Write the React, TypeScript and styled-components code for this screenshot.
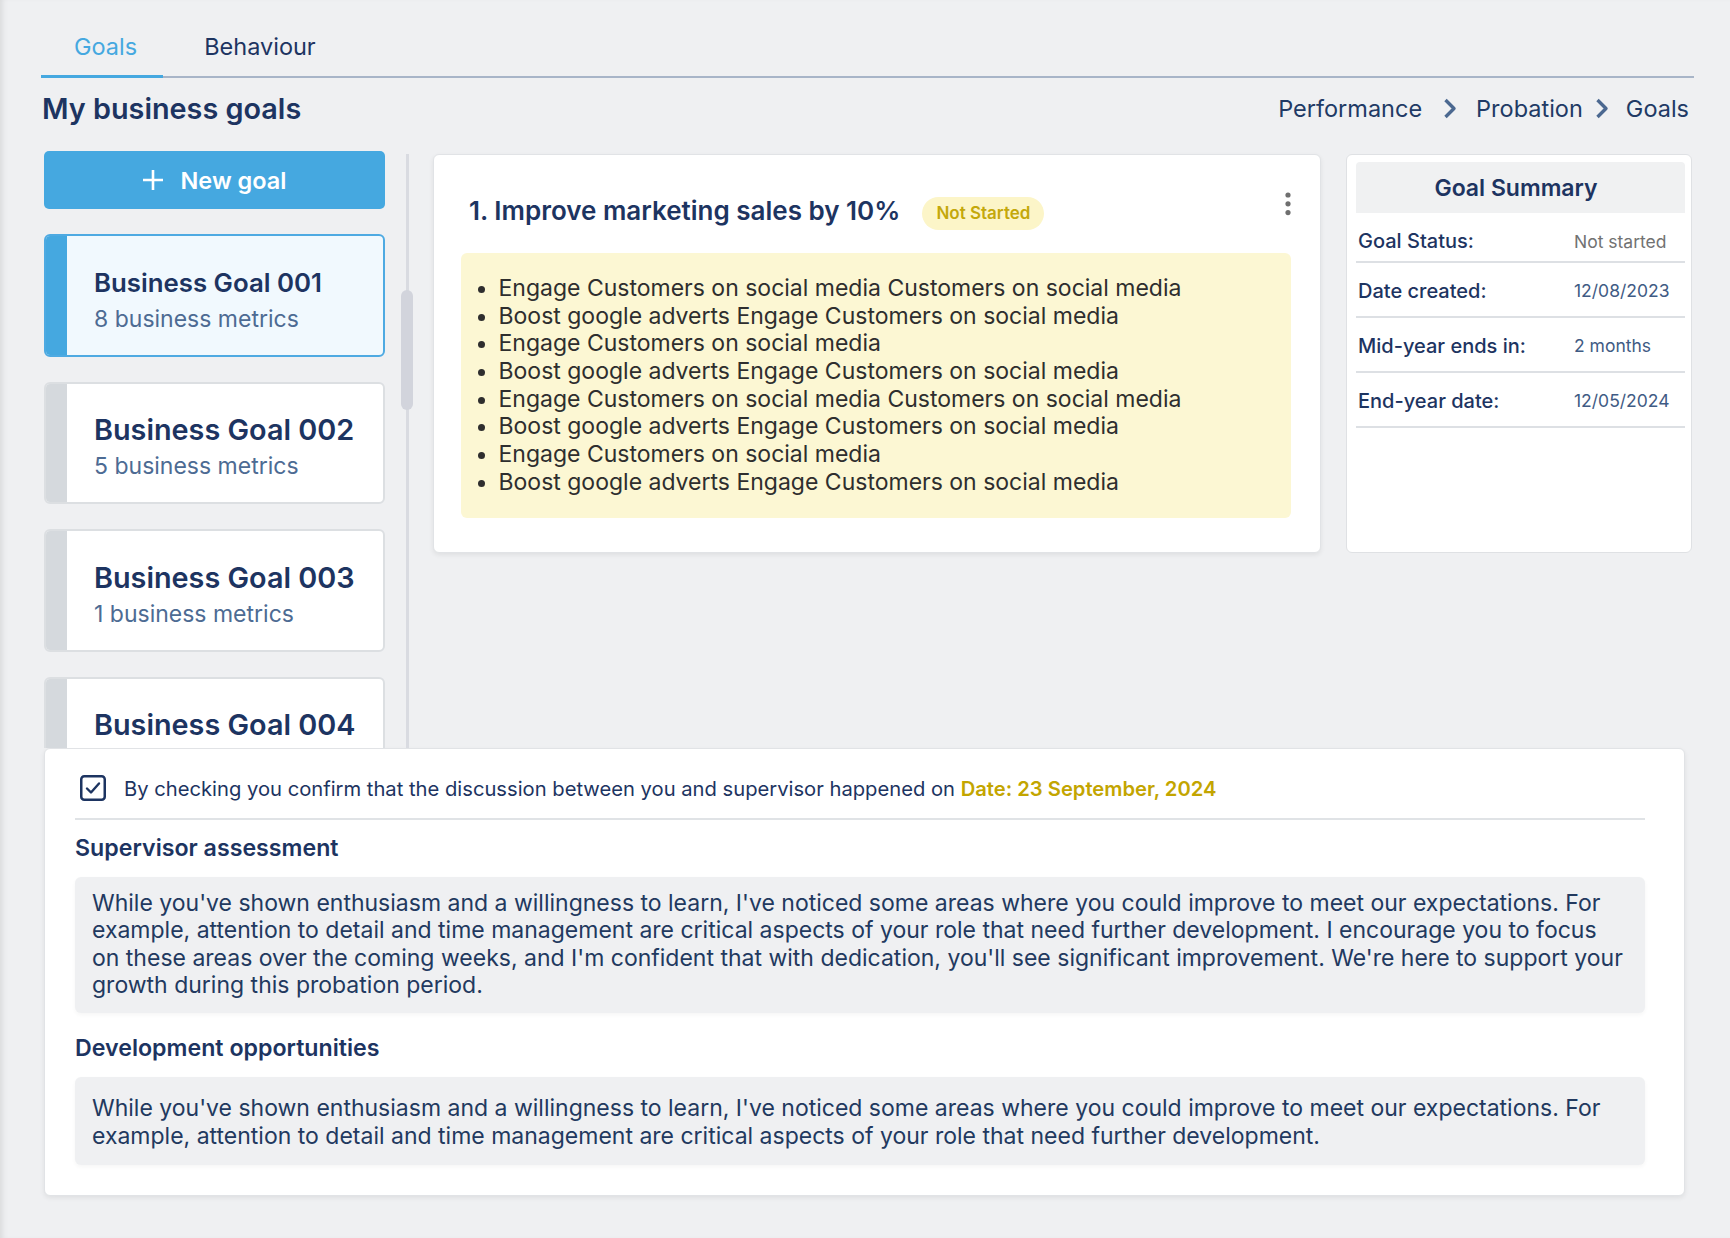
import React from 'react';
import styled, { createGlobalStyle } from 'styled-components';

const GlobalStyle = createGlobalStyle`
  html, body { margin: 0; padding: 0; background: #eff0f2; }
  body {
    font-family: Inter, "Noto Sans", Arial, sans-serif;
    color: #1d3461;
    -webkit-font-smoothing: antialiased;
  }
  * { box-sizing: border-box; }
`;

const NAVY = '#1d3461';

const Page = styled.div`
  min-height: 1238px;
  padding: 0 36px 0 41px;
  box-shadow: inset 6px 0 6px -4px rgba(0, 0, 0, 0.1);
`;

const Tabs = styled.nav`
  display: flex;
  gap: 8px;
  height: 78px;
  border-bottom: 2px solid #a8b5c8;
`;

const Tab = styled.div<{ $active?: boolean }>`
  display: flex;
  align-items: center;
  padding: 17px 26px 0 33px;
  margin-bottom: -2px;
  border-bottom: 3px solid ${(p) => (p.$active ? '#45a8e0' : 'transparent')};
  font-size: 23.5px;
  font-weight: 400;
  color: ${(p) => (p.$active ? '#45a8e0' : NAVY)};
`;

const TitleRow = styled.header`
  display: flex;
  align-items: center;
  justify-content: space-between;
  height: 37px;
  margin-top: 12px;
  padding: 0 5px 0 1px;
`;

const PageTitle = styled.h1`
  margin: 0;
  font-size: 28.8px;
  font-weight: 600;
  color: ${NAVY};
`;

const Breadcrumb = styled.div`
  display: flex;
  align-items: center;
  font-size: 23.5px;
  color: #213a65;
`;

const CrumbSep = styled.span<{ $before: number; $after: number }>`
  display: flex;
  margin: 0 ${(p) => p.$after}px 0 ${(p) => p.$before}px;
`;

const Content = styled.div`
  display: flex;
  align-items: flex-start;
  height: 597px;
  margin: 24px 0 0 3px;
`;

const LeftCol = styled.div`
  width: 341px;
  height: 597px;
  flex-shrink: 0;
  display: flex;
  flex-direction: column;
  gap: 25px;
  overflow: hidden;
`;

const NewGoalButton = styled.button`
  height: 58px;
  flex-shrink: 0;
  border: none;
  border-radius: 5px;
  background: #45a8e0;
  color: #fff;
  font-family: inherit;
  font-size: 23.5px;
  font-weight: 600;
  display: flex;
  align-items: center;
  justify-content: center;
  gap: 18px;
  cursor: pointer;
`;

const GoalItem = styled.div<{ $active?: boolean }>`
  height: 122.5px;
  flex-shrink: 0;
  display: flex;
  border-radius: 6px;
  overflow: hidden;
  border: 2px solid ${(p) => (p.$active ? '#4eaae2' : '#dcdfe2')};
  background: ${(p) => (p.$active ? '#f1f9fe' : '#ffffff')};
`;

const Accent = styled.div<{ $active?: boolean }>`
  width: 21px;
  flex-shrink: 0;
  background: ${(p) => (p.$active ? '#45a8e0' : '#d5d9dd')};
`;

const ItemBody = styled.div`
  display: flex;
  flex-direction: column;
  justify-content: flex-start;
  padding: 30.5px 0 0 27px;
`;

const ItemTitle = styled.div<{ $active?: boolean }>`
  font-size: ${(p) => (p.$active ? 25.8 : 28.8)}px;
  line-height: 32px;
  font-weight: 600;
  color: ${NAVY};
  white-space: nowrap;
`;

const ItemSub = styled.div`
  margin-top: 6px;
  font-size: 23px;
  line-height: 28px;
  color: #4d6b93;
`;

const ScrollRail = styled.div`
  width: 12px;
  height: 594px;
  flex-shrink: 0;
  margin: 3px 20px 0 16px;
  display: flex;
  flex-direction: column;
  background: linear-gradient(#d9dbe1, #d9dbe1) center / 3px 100% no-repeat;
`;

const ScrollThumb = styled.div`
  width: 12px;
  height: 120px;
  margin-top: 136px;
  border-radius: 6px;
  background: #d2d4dc;
`;

const Card = styled.section`
  background: #ffffff;
  border: 1px solid #e1e3e6;
  border-radius: 6px;
  box-shadow: 0 2px 5px rgba(0, 0, 0, 0.07);
`;

const GoalCard = styled(Card)`
  width: 888px;
  height: 399px;
  flex-shrink: 0;
  margin-top: 3px;
  padding: 24px 29px 0 27px;
`;

const GoalHeader = styled.div`
  display: flex;
  align-items: center;
  gap: 22px;
  height: 62px;
  padding-left: 8px;
`;

const GoalTitle = styled.h2`
  margin: 0;
  font-size: 26px;
  font-weight: 600;
  color: ${NAVY};
`;

const Badge = styled.span`
  display: inline-flex;
  align-items: center;
  height: 33px;
  padding: 0 14px;
  border-radius: 17px;
  background: #fcf5c8;
  color: #c4a80b;
  font-size: 17px;
  font-weight: 600;
  margin-top: 6px;
`;

const Kebab = styled.button`
  margin-left: auto;
  margin-bottom: 13px;
  padding: 0;
  border: none;
  background: none;
  display: flex;
  cursor: pointer;
`;

const MetricsBox = styled.div`
  margin-top: 12px;
  height: 265px;
  border-radius: 6px;
  background: #fcf7d3;
  padding: 22px 20px 22px 37.5px;
`;

const MetricsList = styled.ul`
  margin: 0;
  padding: 0;
  list-style: disc;
  font-size: 23px;
  line-height: 27.65px;
  color: #2e2e2e;
`;

const SummaryCard = styled(Card)`
  width: 346px;
  height: 399px;
  flex-shrink: 0;
  margin: 3px 0 0 25px;
  padding: 7px 6px 0 9px;
  box-shadow: none;
  border: 1.5px solid #dfe1e4;
`;

const SummaryHeader = styled.h3`
  margin: 0;
  height: 51px;
  display: flex;
  align-items: center;
  justify-content: center;
  padding-right: 9px;
  background: #f0f1f2;
  border-radius: 4px 4px 0 0;
  font-size: 23px;
  font-weight: 600;
  color: ${NAVY};
`;

const SummaryRow = styled.div`
  display: grid;
  grid-template-columns: 216px 1fr;
  align-items: center;
  height: 55px;
  padding: 2px 0 0 2px;
  border-bottom: 2px solid #dde0e4;
  &:first-of-type {
    height: 50px;
    padding-top: 8px;
  }
`;

const SummaryLabel = styled.span`
  font-size: 20px;
  font-weight: 500;
  color: ${NAVY};
`;

const SummaryValue = styled.span<{ $muted?: boolean }>`
  font-size: 17.5px;
  color: ${(p) => (p.$muted ? '#727272' : '#3f5b84')};
`;

const BottomPanel = styled(Card)`
  width: 1641px;
  margin-left: 3px;
  padding: 26px 39px 30.5px 30px;
`;

const CheckRow = styled.label`
  display: flex;
  align-items: center;
  gap: 18px;
  height: 45px;
  padding: 0 0 17px 5px;
  border-bottom: 2px solid #e0e3e6;
  font-size: 20.2px;
  color: ${NAVY};
`;

const DateText = styled.span`
  color: #c3a500;
  font-weight: 600;
`;

const SectionHeading = styled.h3<{ $top: number }>`
  margin: ${(p) => p.$top}px 0 15px;
  font-size: 23.2px;
  line-height: 28px;
  font-weight: 600;
  color: ${NAVY};
`;

const TextBox = styled.div<{ $padTop: number; $padBottom: number }>`
  background: #eff0f2;
  border-radius: 6px;
  box-shadow: 0 2px 4px rgba(0, 0, 0, 0.04);
  padding: ${(p) => p.$padTop}px 17px ${(p) => p.$padBottom}px 17px;
  font-size: 23px;
  line-height: 27.5px;
  color: #22395f;
`;

const PlusIcon = () => (
  <svg width="20" height="20" viewBox="0 0 20 20" aria-hidden>
    <path d="M10 0v20M0 10h20" stroke="#fff" strokeWidth="2.6" />
  </svg>
);

const Chevron = () => (
  <svg width="14" height="21" viewBox="0 0 14 21" aria-hidden>
    <polyline points="2.5,2 11,10.5 2.5,19" fill="none" stroke="#4b6890" strokeWidth="3.4" strokeLinejoin="round" />
  </svg>
);

const KebabIcon = () => (
  <svg width="6" height="24" viewBox="0 0 6 24" aria-hidden>
    <circle cx="3" cy="3" r="2.6" fill="#6f6f6f" />
    <circle cx="3" cy="11.8" r="2.6" fill="#6f6f6f" />
    <circle cx="3" cy="20.6" r="2.6" fill="#6f6f6f" />
  </svg>
);

const CheckIcon = () => (
  <svg width="26" height="26" viewBox="0 0 26 26" aria-hidden>
    <rect x="1.25" y="1.25" width="23.5" height="23.5" rx="3" fill="#fff" stroke={NAVY} strokeWidth="2.5" />
    <path d="M7 13.5l4 4 8-9" fill="none" stroke={NAVY} strokeWidth="2.4" strokeLinecap="round" strokeLinejoin="round" />
  </svg>
);

const goals: { title: string; sub?: string; active?: boolean }[] = [
  { title: 'Business Goal 001', sub: '8 business metrics', active: true },
  { title: 'Business Goal 002', sub: '5 business metrics' },
  { title: 'Business Goal 003', sub: '1 business metrics' },
  { title: 'Business Goal 004' },
];

const metrics = [
  'Engage Customers on social media Customers on social media',
  'Boost google adverts Engage Customers on social media',
  'Engage Customers on social media',
  'Boost google adverts Engage Customers on social media',
  'Engage Customers on social media Customers on social media',
  'Boost google adverts Engage Customers on social media',
  'Engage Customers on social media',
  'Boost google adverts Engage Customers on social media',
];

const summary = [
  { label: 'Goal Status:', value: 'Not started', muted: true },
  { label: 'Date created:', value: '12/08/2023' },
  { label: 'Mid-year ends in:', value: '2 months' },
  { label: 'End-year date:', value: '12/05/2024' },
];

const assessment =
  "While you've shown enthusiasm and a willingness to learn, I've noticed some areas where you could improve to meet our expectations. For example, attention to detail and time management are critical aspects of your role that need further development. I encourage you to focus on these areas over the coming weeks, and I'm confident that with dedication, you'll see significant improvement. We're here to support your growth during this probation period.";

const development =
  "While you've shown enthusiasm and a willingness to learn, I've noticed some areas where you could improve to meet our expectations. For example, attention to detail and time management are critical aspects of your role that need further development.";

export default function App() {
  return (
    <>
      <GlobalStyle />
      <Page>
        <Tabs>
          <Tab $active>Goals</Tab>
          <Tab>Behaviour</Tab>
        </Tabs>

        <TitleRow>
          <PageTitle>My business goals</PageTitle>
          <Breadcrumb>
            <span>Performance</span>
            <CrumbSep $before={21} $after={19}>
              <Chevron />
            </CrumbSep>
            <span>Probation</span>
            <CrumbSep $before={12} $after={17}>
              <Chevron />
            </CrumbSep>
            <span>Goals</span>
          </Breadcrumb>
        </TitleRow>

        <Content>
          <LeftCol>
            <NewGoalButton>
              <PlusIcon />
              New goal
            </NewGoalButton>
            {goals.map((g) => (
              <GoalItem key={g.title} $active={g.active}>
                <Accent $active={g.active} />
                <ItemBody>
                  <ItemTitle $active={g.active}>{g.title}</ItemTitle>
                  {g.sub && <ItemSub>{g.sub}</ItemSub>}
                </ItemBody>
              </GoalItem>
            ))}
          </LeftCol>

          <ScrollRail>
            <ScrollThumb />
          </ScrollRail>

          <GoalCard>
            <GoalHeader>
              <GoalTitle>1. Improve marketing sales by 10%</GoalTitle>
              <Badge>Not Started</Badge>
              <Kebab aria-label="More options">
                <KebabIcon />
              </Kebab>
            </GoalHeader>
            <MetricsBox>
              <MetricsList>
                {metrics.map((m, i) => (
                  <li key={i}>{m}</li>
                ))}
              </MetricsList>
            </MetricsBox>
          </GoalCard>

          <SummaryCard>
            <SummaryHeader>Goal Summary</SummaryHeader>
            {summary.map((s) => (
              <SummaryRow key={s.label}>
                <SummaryLabel>{s.label}</SummaryLabel>
                <SummaryValue $muted={s.muted}>{s.value}</SummaryValue>
              </SummaryRow>
            ))}
          </SummaryCard>
        </Content>

        <BottomPanel>
          <CheckRow>
            <CheckIcon />
            <span>
              By checking you confirm that the discussion between you and supervisor happened on{' '}
              <DateText>Date: 23 September, 2024</DateText>
            </span>
          </CheckRow>
          <SectionHeading $top={14}>Supervisor assessment</SectionHeading>
          <TextBox $padTop={12.5} $padBottom={13.5}>{assessment}</TextBox>
          <SectionHeading $top={21}>Development opportunities</SectionHeading>
          <TextBox $padTop={18} $padBottom={14.5}>{development}</TextBox>
        </BottomPanel>
      </Page>
    </>
  );
}
